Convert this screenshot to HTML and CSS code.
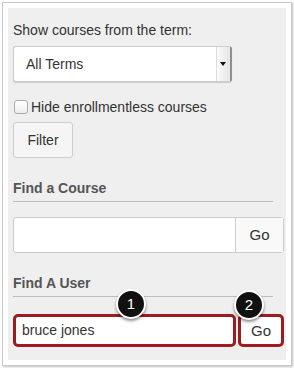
FILE: index.html
```html
<!DOCTYPE html>
<html lang="en">
<head>
    <meta charset="UTF-8">
    <meta name="viewport" content="width=device-width, initial-scale=1.0">
    <title>Course Search</title>
    <link rel="stylesheet" href="styles.css">
</head>
<body>
    <div class="frame">
        <div class="panel">
            <!-- Term filter -->
            <label class="field-label">Show courses from the term:</label>
            <div class="select">
                <span class="select-text">All Terms</span>
                <span class="select-arrow"></span>
            </div>

            <label class="check-row">
                <span class="checkbox"></span>
                Hide enrollmentless courses
            </label>
            <button class="btn" type="button">Filter</button>

            <!-- Course search -->
            <h3 class="section-title">Find a Course</h3>
            <div class="input-group">
                <div class="input"></div>
                <div class="addon">Go</div>
            </div>

            <!-- User search -->
            <h3 class="section-title">Find A User</h3>
            <div class="input-group highlighted">
                <div class="input">bruce jones</div>
                <div class="addon">Go</div>
                <span class="badge badge-one">1</span>
                <span class="badge badge-two">2</span>
            </div>
        </div>
    </div>
</body>
</html>
```

FILE: styles.css
```css
body {
    margin: 0;
    padding: 2px;
    background: #fff;
    font-family: "Liberation Sans", Arial, sans-serif;
    color: #333;
}
.frame {
    width: 290px;
    height: 364px;
    box-sizing: border-box;
    border: 1px solid #c9c9c9;
    padding: 5px;
    box-shadow: 1px 1px 2px rgba(0, 0, 0, 0.25);
}
.panel {
    width: 278px;
    height: 352px;
    box-sizing: border-box;
    background: #efefef;
    padding: 12px 2px 0 5px;
}
.field-label {
    display: block;
    font-size: 14px;
    line-height: 20px;
}
.select {
    display: flex;
    width: 219px;
    height: 36px;
    margin-top: 6px;
    box-sizing: border-box;
    background: #fff;
    border: 1px solid #ccc;
    border-right: 2px solid #8f8f8f;
    border-radius: 3px;
    box-shadow: 0 1px 1px rgba(0, 0, 0, 0.15);
}
.select-text {
    flex: 1;
    padding-left: 12px;
    font-size: 14px;
    line-height: 34px;
}
.select-arrow {
    position: relative;
    width: 13px;
    background: linear-gradient(to right, #fafafa, #e6e6e6);
    border-left: 1px solid #ddd;
}
.select-arrow::after {
    content: "";
    position: absolute;
    left: 3px;
    top: 15px;
    border-left: 3px solid transparent;
    border-right: 3px solid transparent;
    border-top: 4px solid #111;
}
.check-row {
    display: flex;
    align-items: center;
    gap: 3px;
    margin-top: 15px;
    font-size: 14px;
    line-height: 20px;
}
.checkbox {
    width: 12px;
    height: 12px;
    margin-left: 1px;
    border: 1px solid #aaa;
    border-radius: 3px;
    background: linear-gradient(#fff, #eee);
}
.btn {
    display: block;
    width: 60px;
    height: 36px;
    margin-top: 5px;
    background: #f5f5f5;
    border: 1px solid #ccc;
    border-radius: 3px;
    font-family: inherit;
    font-size: 14px;
    color: #333;
}
.section-title {
    margin: 20px 11px 0 0;
    padding-bottom: 3px;
    border-bottom: 1px solid #bdbdbd;
    font-size: 14px;
    line-height: 20px;
    color: #555;
}
.input-group {
    position: relative;
    display: flex;
    height: 36px;
    margin-top: 15px;
    box-sizing: border-box;
    border: 1px solid #ccc;
    border-radius: 3px;
    background: #fff;
}
.input {
    flex: 1;
    padding-left: 8px;
    font-size: 14px;
    line-height: 32px;
}
.addon {
    width: 47px;
    border-left: 1px solid #ccc;
    background: #f9f9f9;
    text-align: center;
    font-size: 15px;
    line-height: 34px;
}
.highlighted {
    height: 33px;
    margin-top: 17px;
    gap: 2px;
    border: none;
    background: none;
}
.highlighted .input,
.highlighted .addon {
    box-sizing: border-box;
    border: 3px solid #9c1c20;
    border-radius: 5px;
    background: #fff;
    line-height: 27px;
}
.highlighted .input {
    padding-left: 6px;
}
.highlighted .addon {
    width: 46px;
}
.badge {
    position: absolute;
    width: 30px;
    height: 30px;
    box-sizing: border-box;
    border: 2px solid #fff;
    border-radius: 50%;
    background: #111;
    color: #fff;
    text-align: center;
    font-size: 15px;
    line-height: 26px;
    box-shadow: 0 2px 3px rgba(0, 0, 0, 0.45);
}
.badge-one {
    left: 103px;
    top: -25px;
}
.badge-two {
    left: 221px;
    top: -24px;
}
```
